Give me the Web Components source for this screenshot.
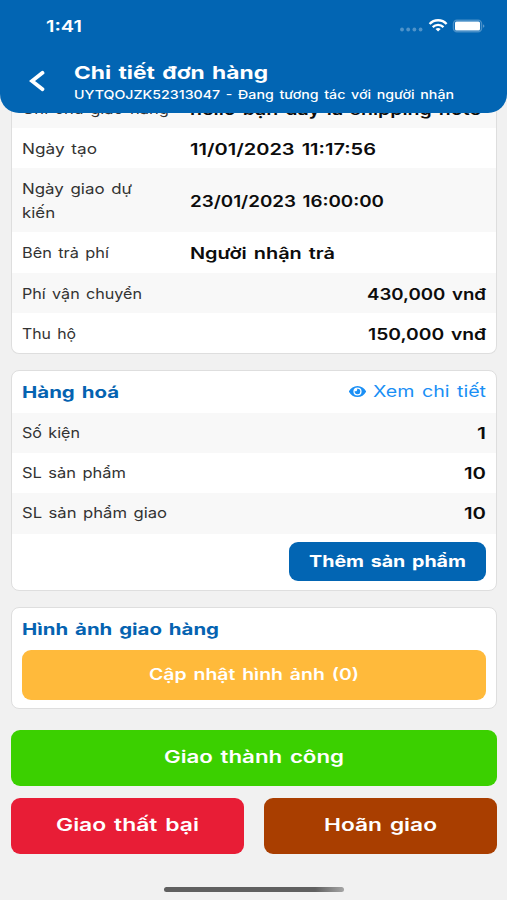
<!DOCTYPE html>
<html lang="vi">
<head>
<meta charset="utf-8">
<meta name="viewport" content="width=device-width, initial-scale=1">
<title>Chi tiết đơn hàng</title>
<style>
  html, body {
    margin: 0;
    height: 900px;
    overflow: hidden;
    background: #f1f1f1;
    font-family: Inter, "Noto Sans", sans-serif;
  }
</style>
</head>
<body>
<order-screen></order-screen>

<script>
class OrderScreen extends HTMLElement {
  constructor() {
    super();
    this.attachShadow({ mode: "open" });

    // lw, vw = rendered text widths in px
    this.shipping = [
      { label: "Ghi chú giao hàng", lw: 147, value: "hello bạn đây là shipping note", vw: 291 },
      { label: "Ngày tạo", lw: 75, value: "11/01/2023 11:17:56", vw: 186 },
      { label: "Ngày giao dự<br>kiến", lw: 110, value: "23/01/2023 16:00:00", vw: 194, tall: true },
      { label: "Bên trả phí", lw: 87, value: "Người nhận trả", vw: 145 },
      { label: "Phí vận chuyển", lw: 120, value: "430,000 vnđ", vw: 119, end: true },
      { label: "Thu hộ", lw: 54, value: "150,000 vnđ", vw: 118, end: true },
    ];

    this.goods = [
      { label: "Số kiện", lw: 58, value: "1", vw: 9, end: true },
      { label: "SL sản phẩm", lw: 104, value: "10", vw: 22, end: true },
      { label: "SL sản phẩm giao", lw: 145, value: "10", vw: 22, end: true },
    ];
  }

  connectedCallback() {
    this.render();
  }

  rowTemplate(row) {
    return `
      <info-row class="${row.tall ? "tall" : ""} ${row.end ? "end" : ""}">
        <wide-text slot="label" w="${row.lw}">${row.label}</wide-text>
        <wide-text slot="value" w="${row.vw}">${row.value}</wide-text>
      </info-row>
    `;
  }

  render() {
    this.shadowRoot.innerHTML = `
      ${this.styles()}
<app-header></app-header>

<main>
  <info-card class="first">
    ${this.shipping.map((r) => this.rowTemplate(r)).join("")}
  </info-card>

  <info-card class="goods">
    <div class="card-head">
      <wide-text class="heading" w="97">Hàng hoá</wide-text>
      <div class="link">
        <svg width="17" height="11" viewBox="0 0 17 11">
          <path fill-rule="evenodd" d="M8.5 0C4.8 0 1.7 2.2 .1 5.1a.8.8 0 0 0 0 .8C1.7 8.8 4.8 11 8.5 11s6.8-2.2 8.4-5.1a.8.8 0 0 0 0-.8C15.3 2.2 12.2 0 8.5 0zM8.5 1.400a4.100 4.100 0 1 1 0 8.200 4.100 4.100 0 0 1 0-8.200z"/>
          <path d="M8.5 2.700a2.800 2.800 0 1 1-2.700 2.100 1.400 1.400 0 0 0 2-2 2.800 2.800 0 0 1 .7-.1z"/>
        </svg>
        <wide-text w="113">Xem chi tiết</wide-text>
      </div>
    </div>
    ${this.goods.map((r) => this.rowTemplate(r)).join("")}
    <div class="card-foot">
      <action-button class="add"><wide-text w="157">Thêm sản phẩm</wide-text></action-button>
    </div>
  </info-card>

  <info-card class="photos">
    <wide-text class="heading" w="197">Hình ảnh giao hàng</wide-text>
    <action-button class="update"><wide-text w="210">Cập nhật hình ảnh (0)</wide-text></action-button>
  </info-card>

  <div class="actions">
    <action-button class="success"><wide-text w="180">Giao thành công</wide-text></action-button>
    <div class="pair">
      <action-button class="fail"><wide-text w="143">Giao thất bại</wide-text></action-button>
      <action-button class="delay"><wide-text w="113">Hoãn giao</wide-text></action-button>
    </div>
  </div>
</main>

<div class="home-bar"></div>
    `;
  }

  styles() {
    return `
<style>
  :host {
    display: flex;
    flex-direction: column;
    position: relative;
    height: 900px;
    box-sizing: border-box;
    word-spacing: 0.1em;
  }

  main {
    padding: 88px 10px 0 11px;
    flex: 1;
  }

  .first {
    --radius: 0 0 8px 8px;
    --drop: 2px;
    height: 265.500px;
    border-top: 0;
  }

  info-row:nth-child(odd) {
    background: #f8f8f8;
  }

  .goods info-row:nth-child(odd) {
    background: #fff;
  }

  .goods info-row:nth-child(even) {
    background: #f8f8f8;
  }

  .goods {
    margin-top: 16.500px;
    height: 220.500px;
  }

  .card-head {
    display: flex;
    justify-content: space-between;
    align-items: center;
    height: 42px;
    padding: 0 10px;
  }

  .heading {
    color: #0563b1;
    font-size: 16px;
    font-weight: 700;
  }

  .link {
    display: flex;
    align-items: center;
    gap: 7px;
    padding-bottom: 2px;
    color: #1a8ff5;
    fill: #1a8ff5;
    font-size: 16px;
  }

  .card-foot {
    display: flex;
    justify-content: flex-end;
    padding: 8px 10px 0;
  }

  .add {
    width: 197px;
    height: 39.500px;
    background: #0265b3;
    font-size: 16px;
    --weight: 700;
  }

  .photos {
    margin-top: 16.500px;
    height: 102px;
    padding: 0 10px;
  }

  .photos .heading {
    height: 42px;
    line-height: 43px;
  }

  .update {
    height: 50px;
    background: #ffba3b;
    font-size: 15.500px;
    --weight: 600;
  }

  .actions {
    display: flex;
    flex-direction: column;
    gap: 12px;
    margin-top: 20.500px;
  }

  .actions action-button {
    height: 56px;
    font-size: 17px;
  }

  .pair {
    display: flex;
    gap: 19.500px;
  }

  .pair action-button {
    flex: 1;
  }

  .success { background: #3bd000; }
  .fail { background: #e81d36; }
  .delay { background: #a93e00; }

  .home-bar {
    width: 180px;
    height: 5px;
    margin: 0 auto 8px;
    border-radius: 3px;
    background: linear-gradient(90deg, #606060 84%, #a5a5a5);
  }
</style>
    `;
  }
}

class AppHeader extends HTMLElement {
  constructor() {
    super();
    this.attachShadow({ mode: "open" });
  }

  connectedCallback() {
    this.shadowRoot.innerHTML = `
<style>
  :host {
    position: absolute;
    top: 0;
    left: 0;
    right: 0;
    z-index: 1;
    height: 113px;
    border-radius: 0 0 19px 19px;
    background: #0265b3;
    color: #fff;
  }

  .status {
    display: flex;
    justify-content: space-between;
    align-items: center;
    height: 52px;
    padding: 0 20px 0 46px;
    font-size: 16px;
    font-weight: 600;
  }

  .nav {
    display: flex;
    padding-left: 29px;
  }

  .nav svg {
    margin: 18px 29px 0 0;
  }

  .titles {
    display: flex;
    flex-direction: column;
  }

  .title {
    font-size: 18px;
    font-weight: 700;
    line-height: 24px;
    margin-top: 9px;
  }

  .sub {
    font-size: 12px;
    font-weight: 500;
    line-height: 18px;
    margin-top: 1px;
  }
</style>
<div class="status">
  <wide-text w="36">1:41</wide-text>
  <svg width="88" height="16" viewBox="0 0 88 16" fill="#fff">
    <g opacity=".3">
      <circle cx="3" cy="11.500" r="1.900"/>
      <circle cx="9.200" cy="11.500" r="1.900"/>
      <circle cx="15.400" cy="11.500" r="1.900"/>
      <circle cx="21.600" cy="11.500" r="1.900"/>
    </g>
    <g fill="none" stroke="#fff" stroke-width="2.300">
      <path d="M30.600 6a11.500 11.500 0 0 1 17 0"/>
      <path d="M33.700 9.100a7.700 7.700 0 0 1 10.800 0"/>
    </g>
    <path d="M39.100 13.600l-2.600-2.500a4 4 0 0 1 5.200 0z"/>
    <rect x="54.500" y="2.200" width="28" height="11.600" rx="3.500" fill="none" stroke="#fff" stroke-width="1.500" stroke-opacity=".28"/>
    <rect x="56" y="3.600" width="25" height="8.800" rx="1.500"/>
    <path d="M84.300 6.200q2 1.800 0 3.600z" opacity=".5"/>
  </svg>
</div>
<div class="nav">
  <svg width="16" height="22" viewBox="0 0 16 22" fill="none" stroke="#fff" stroke-width="3.800" stroke-linecap="round">
    <path d="M13.500 2.800L3 11l10.500 8.200"/>
  </svg>
  <div class="titles">
    <wide-text class="title" w="194">Chi tiết đơn hàng</wide-text>
    <wide-text class="sub" w="380">UYTQOJZK52313047 - Đang tương tác với người nhận</wide-text>
  </div>
</div>
    `;
  }
}

class InfoCard extends HTMLElement {
  constructor() {
    super();
    this.attachShadow({ mode: "open" });
  }

  connectedCallback() {
    this.shadowRoot.innerHTML = `
<style>
  :host {
    display: block;
    box-sizing: border-box;
    overflow: hidden;
    border: 1px solid #dedede;
    border-radius: var(--radius, 8px);
    background: #fff;
  }
</style>
<slot></slot>
    `;
  }
}

class InfoRow extends HTMLElement {
  constructor() {
    super();
    this.attachShadow({ mode: "open" });
  }

  connectedCallback() {
    this.shadowRoot.innerHTML = `
<style>
  :host {
    display: flex;
    align-items: center;
    box-sizing: border-box;
    height: 40.200px;
    padding: var(--drop, 0) 10px 0;
  }

  :host(.tall) {
    height: 64px;
  }

  .label {
    width: 168px;
    color: #333;
    font-size: 14.500px;
    line-height: 24px;
  }

  .value {
    flex: 1;
    display: flex;
    color: #0c0c0c;
    font-size: 16px;
    font-weight: 600;
  }

  :host(.end) .value {
    justify-content: flex-end;
  }
</style>
<div class="label"><slot name="label"></slot></div>
<div class="value"><slot name="value"></slot></div>
    `;
  }
}

class ActionButton extends HTMLElement {
  constructor() {
    super();
    this.attachShadow({ mode: "open" });
  }

  connectedCallback() {
    this.shadowRoot.innerHTML = `
<style>
  :host {
    display: flex;
    align-items: center;
    justify-content: center;
    border-radius: 9px;
    color: #fff;
    font-weight: var(--weight, 600);
    padding-bottom: 1px;
    box-sizing: border-box;
  }
</style>
<slot></slot>
    `;
  }
}

// stretches its text sideways to the width in "w"
class WideText extends HTMLElement {
  constructor() {
    super();
    this.attachShadow({ mode: "open" });
  }

  connectedCallback() {
    this.shadowRoot.innerHTML = `
<style>
  :host {
    display: block;
  }

  span {
    display: inline-block;
    white-space: nowrap;
    transform-origin: left;
  }
</style>
<span><slot></slot></span>
    `;
    const w = Number(this.getAttribute("w"));
    const span = this.shadowRoot.querySelector("span");
    this.style.width = w + "px";
    span.style.transform = `scaleX(${w / span.getBoundingClientRect().width})`;
  }
}

customElements.define("info-card", InfoCard);
customElements.define("info-row", InfoRow);
customElements.define("action-button", ActionButton);
customElements.define("app-header", AppHeader);
customElements.define("order-screen", OrderScreen);
// last, so that it measures inside finished parents
customElements.define("wide-text", WideText);
</script>
</body>
</html>
